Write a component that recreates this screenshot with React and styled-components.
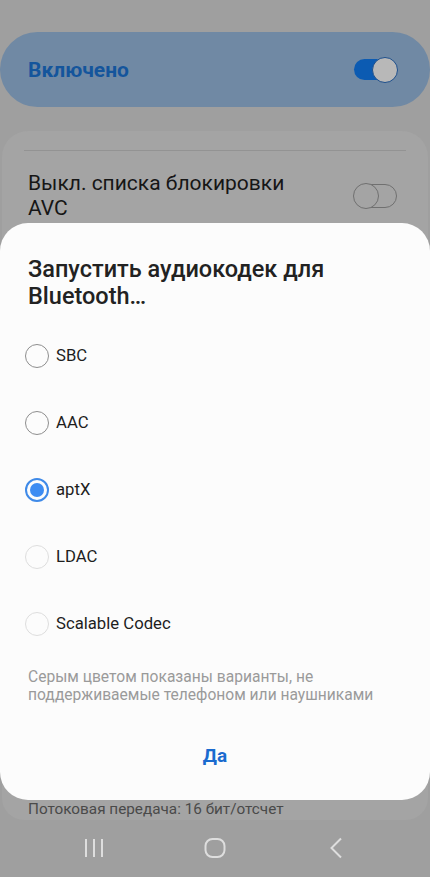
import React from 'react';
import styled, { createGlobalStyle } from 'styled-components';

const GlobalStyle = createGlobalStyle`
  html, body {
    margin: 0;
    padding: 0;
    background: #9f9f9f;
  }
  * {
    box-sizing: border-box;
  }
`;

const Screen = styled.div`
  position: relative;
  width: 430px;
  height: 877px;
  overflow: hidden;
  display: flex;
  flex-direction: column;
  background: #9f9f9f;
  font-family: Roboto, 'Noto Sans', sans-serif;
`;

// the list is scrolled: only the descenders of this line peek in at the top
const ClippedHeading = styled.div`
  margin-top: -20px;
  padding-left: 28px;
  height: 52px;
  font-size: 17px;
  line-height: 20px;
  color: #1a1a1a;
`;

const MasterCard = styled.div`
  display: flex;
  align-items: center;
  justify-content: space-between;
  height: 75px;
  padding: 0 33px 0 28px;
  border-radius: 38px;
  background: #7089a4;
`;

const MasterLabel = styled.span`
  font-size: 21px;
  font-weight: 700;
  color: #14559c;
`;

const Track = styled.div`
  position: relative;
  width: 43px;
  height: ${(p) => (p.$on ? '21px' : '24px')};
  border-radius: 12px;
  background: ${(p) => (p.$on ? '#0c5bb2' : 'transparent')};
  border: ${(p) => (p.$on ? 'none' : '1.5px solid #707070')};
`;

const Thumb = styled.div`
  position: absolute;
  top: 50%;
  ${(p) => (p.$on ? 'right: -1px;' : 'left: -2px;')}
  width: 26px;
  height: 26px;
  margin-top: -13px;
  border-radius: 50%;
  background: ${(p) => (p.$on ? '#b8b8b8' : '#a4a4a4')};
  border: 1.5px solid ${(p) => (p.$on ? '#1d4f8c' : '#707070')};
`;

function Toggle({ on }) {
  return (
    <Track $on={on}>
      <Thumb $on={on} />
    </Track>
  );
}

const SettingsCard = styled.div`
  flex: 1;
  display: flex;
  flex-direction: column;
  margin: 24px 2px 0;
  padding: 19px 22px 0;
  border-radius: 26px 26px 22px 22px;
  background: #a4a4a4;
`;

const Divider = styled.div`
  height: 1px;
  background: #939393;
`;

const SettingRow = styled.div`
  display: flex;
  align-items: center;
  justify-content: space-between;
  padding: 20px 9px 0 4px;
`;

const SettingText = styled.span`
  font-size: 21px;
  line-height: 25px;
  color: #161616;
`;

const Spacer = styled.div`
  flex: 1;
`;

const Caption = styled.div`
  padding: 0 4px 2px;
  font-size: 15.3px;
  line-height: 18px;
  color: #4a4a4a;
`;

const NavBar = styled.nav`
  height: 57px;
  display: flex;
  align-items: center;
  justify-content: space-around;
  padding: 0 34px 2px;
  color: #dedede;
`;

const NavIcon = styled.svg`
  width: 28px;
  height: 28px;
`;

const Dialog = styled.div`
  position: absolute;
  top: 223px;
  left: 0;
  right: 0;
  height: 577px;
  display: flex;
  flex-direction: column;
  padding: 33px 0 0;
  border-radius: 28px;
  background: #fcfcfc;
`;

const DialogTitle = styled.h2`
  margin: 0 28px 12px;
  font-size: 23.5px;
  font-weight: 500;
  line-height: 27px;
  color: #222222;
`;

const OptionList = styled.div`
  display: flex;
  flex-direction: column;
`;

const Option = styled.label`
  display: flex;
  align-items: center;
  gap: 7px;
  height: 67px;
  padding-left: 25px;
  font-size: 16.7px;
  color: #1e1e1e;
`;

const RadioCircle = styled.span`
  display: flex;
  align-items: center;
  justify-content: center;
  width: 24px;
  height: 24px;
  border-radius: 50%;
  border: ${(p) =>
    p.$checked
      ? '2px solid #3f8ae8'
      : p.$disabled
      ? '1.5px solid #dedede'
      : '1.5px solid #8e8e8e'};

  &::after {
    content: '';
    display: ${(p) => (p.$checked ? 'block' : 'none')};
    width: 14px;
    height: 14px;
    border-radius: 50%;
    background: #3d8cf2;
  }
`;

const Note = styled.p`
  margin: 12px 28px 0;
  font-size: 15.6px;
  line-height: 17.5px;
  color: #9a9a9a;
`;

const ConfirmButton = styled.button`
  align-self: center;
  margin-top: 23px;
  height: 56px;
  padding: 0 24px;
  border: none;
  background: transparent;
  font-family: inherit;
  font-size: 19px;
  font-weight: 700;
  color: #1a6bcf;
`;

const codecs = [
  { name: 'SBC' },
  { name: 'AAC' },
  { name: 'aptX', checked: true },
  { name: 'LDAC', disabled: true },
  { name: 'Scalable Codec', disabled: true },
];

export default function App() {
  return (
    <>
      <GlobalStyle />
      <Screen>
        <ClippedHeading>Аудиокодек для устройства Bluetooth</ClippedHeading>

        <MasterCard>
          <MasterLabel>Включено</MasterLabel>
          <Toggle on />
        </MasterCard>

        <SettingsCard>
          <Divider />
          <SettingRow>
            <SettingText>
              Выкл. списка блокировки
              <br />
              AVC
            </SettingText>
            <Toggle />
          </SettingRow>
          <Spacer />
          <Caption>Потоковая передача: 16 бит/отсчет</Caption>
        </SettingsCard>

        <NavBar>
          <NavIcon viewBox="0 0 28 28" fill="none" stroke="currentColor" strokeWidth={2}>
            <path d="M6 5v18M14 5v18M22 5v18" />
          </NavIcon>
          <NavIcon viewBox="0 0 28 28" fill="none" stroke="currentColor" strokeWidth={2}>
            <rect x="4.5" y="5" width="19" height="18" rx="7" />
          </NavIcon>
          <NavIcon viewBox="0 0 28 28" fill="none" stroke="currentColor" strokeWidth={2}>
            <path d="M19 4.5L9.5 14l9.5 9.5" />
          </NavIcon>
        </NavBar>

        <Dialog>
          <DialogTitle>
            Запустить аудиокодек для
            <br />
            Bluetooth…
          </DialogTitle>
          <OptionList>
            {codecs.map((c) => (
              <Option key={c.name}>
                <RadioCircle $checked={c.checked} $disabled={c.disabled} />
                {c.name}
              </Option>
            ))}
          </OptionList>
          <Note>
            Серым цветом показаны варианты, не поддерживаемые телефоном или наушниками
          </Note>
          <ConfirmButton>Да</ConfirmButton>
        </Dialog>
      </Screen>
    </>
  );
}
